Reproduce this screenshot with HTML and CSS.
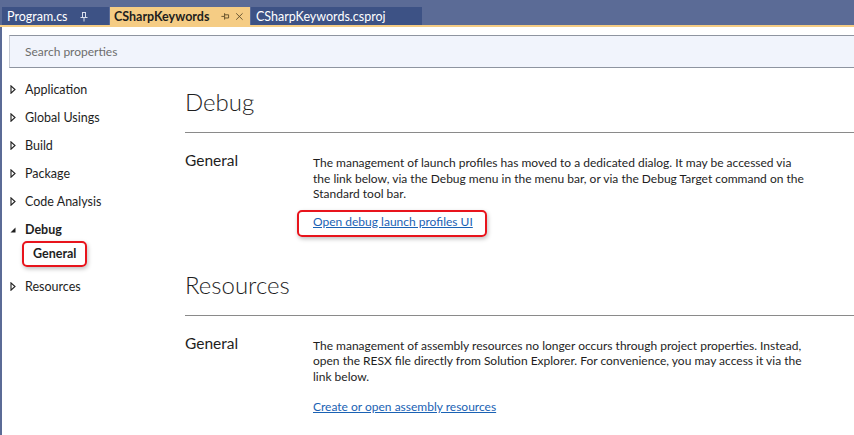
FILE: index.html
```html
<!DOCTYPE html>
<html>
<head>
<meta charset="utf-8">
<link rel="stylesheet" href="styles.css">
</head>
<body>
<div class="frame">
  <div class="tabbar">
    <div class="tab">
      <span class="tab-label">Program.cs</span>
      <svg class="pin" width="10" height="11" viewBox="0 0 10 11"><path d="M3 1.5h4M3.5 1.5v4.5M6.5 1.5v4.5M1.5 6.5h7M5 6.5v4" stroke="#d8deec" stroke-width="1" fill="none"/></svg>
    </div>
    <div class="tab active">
      <span class="tab-label">CSharpKeywords</span>
      <svg class="pin" width="11" height="10" viewBox="0 0 11 10"><path d="M0.5 5.5h3.5M4.5 1.5v8M4.5 3.5h5v4h-5" stroke="#4a3a1a" stroke-width="1" fill="none"/></svg>
      <svg class="close" width="11" height="11" viewBox="0 0 11 11"><path d="M1.5 1.5l8 8M9.5 1.5l-8 8" stroke="#5a4a2a" stroke-width="1.1" fill="none"/></svg>
    </div>
    <div class="tab">
      <span class="tab-label">CSharpKeywords.csproj</span>
    </div>
  </div>
  <div class="goldline"></div>
  <div class="search">Search properties</div>
  <div class="body">
    <nav class="nav">
      <div class="nav-item"><svg class="arrow" width="6" height="9" viewBox="0 0 6 9"><path d="M1 0.8L5 4.5L1 8.2Z" stroke="#1e1e1e" stroke-width="1.1" fill="none"/></svg>Application</div>
      <div class="nav-item"><svg class="arrow" width="6" height="9" viewBox="0 0 6 9"><path d="M1 0.8L5 4.5L1 8.2Z" stroke="#1e1e1e" stroke-width="1.1" fill="none"/></svg>Global Usings</div>
      <div class="nav-item"><svg class="arrow" width="6" height="9" viewBox="0 0 6 9"><path d="M1 0.8L5 4.5L1 8.2Z" stroke="#1e1e1e" stroke-width="1.1" fill="none"/></svg>Build</div>
      <div class="nav-item"><svg class="arrow" width="6" height="9" viewBox="0 0 6 9"><path d="M1 0.8L5 4.5L1 8.2Z" stroke="#1e1e1e" stroke-width="1.1" fill="none"/></svg>Package</div>
      <div class="nav-item"><svg class="arrow" width="6" height="9" viewBox="0 0 6 9"><path d="M1 0.8L5 4.5L1 8.2Z" stroke="#1e1e1e" stroke-width="1.1" fill="none"/></svg>Code Analysis</div>
      <div class="nav-item open"><svg class="arrow" width="6" height="9" viewBox="0 0 6 9"><path d="M0.5 7.5L5.5 2.5L5.5 7.5Z" fill="#1e1e1e"/></svg>Debug</div>
      <div class="nav-sub"><span class="sub-box">General</span></div>
      <div class="nav-item"><svg class="arrow" width="6" height="9" viewBox="0 0 6 9"><path d="M1 0.8L5 4.5L1 8.2Z" stroke="#1e1e1e" stroke-width="1.1" fill="none"/></svg>Resources</div>
    </nav>
    <main class="main">
      <section class="section">
        <h1 class="title">Debug</h1>
        <div class="rule"></div>
        <div class="row">
          <div class="label">General</div>
          <div class="content">
            <p class="desc">The management of launch profiles has moved to a dedicated dialog. It may be accessed via<br>the link below, via the Debug menu in the menu bar, or via the Debug Target command on the<br>Standard tool bar.</p>
            <div class="link-box highlighted"><a class="link" href="#">Open debug launch profiles UI</a></div>
          </div>
        </div>
      </section>
      <section class="section second">
        <h1 class="title">Resources</h1>
        <div class="rule"></div>
        <div class="row">
          <div class="label">General</div>
          <div class="content">
            <p class="desc">The management of assembly resources no longer occurs through project properties. Instead,<br>open the RESX file directly from Solution Explorer. For convenience, you may access it via the<br>link below.</p>
            <div class="link-box"><a class="link" href="#">Create or open assembly resources</a></div>
          </div>
        </div>
      </section>
    </main>
  </div>
</div>
</body>
</html>
```

FILE: styles.css
```css
html, body {
  margin: 0;
  padding: 0;
  background: #ffffff;
}
body {
  font-family: Lato, "Noto Sans", sans-serif;
  color: #1e1e1e;
  width: 854px;
  height: 435px;
  overflow: hidden;
}
.frame {
  height: 435px;
  border-left: 2px solid #5b6b96;
  box-sizing: border-box;
}
.tabbar {
  height: 25px;
  background: #5b6b96;
  display: flex;
  align-items: flex-end;
  gap: 1px;
  box-sizing: border-box;
  margin-left: -2px;
  padding-left: 2px;
}
.tab {
  height: 18px;
  background: #3d5285;
  color: #ffffff;
  display: flex;
  align-items: center;
  font-size: 12.5px;
  padding: 0 6px 0 5px;
  gap: 11px;
  box-sizing: border-box;
}
.tab:first-child { width: 107px; }
.tab:nth-child(3) { width: 171px; }
.tab.active {
  background: #f5cc84;
  color: #1e1e1e;
  font-weight: bold;
  width: 140px;
  gap: 5px;
  padding-left: 4px;
}
.tab.active .pin { margin-left: 7px; }
.tab-label { white-space: nowrap; }
.goldline {
  height: 2px;
  background: #f5cc84;
  margin-left: -2px;
}
.search {
  margin: 8px 0 0 7px;
  height: 33px;
  box-sizing: border-box;
  background: #f1f4fc;
  border-top: 1px solid #8e94a0;
  border-bottom: 1px solid #8e94a0;
  border-left: 1px solid #c8ccd4;
  padding-left: 15px;
  font-size: 12px;
  line-height: 31px;
  color: #6d6d6d;
}
.body {
  display: flex;
}
.nav {
  width: 183px;
  flex: none;
  padding-top: 7px;
  padding-left: 8px;
  box-sizing: border-box;
  font-size: 12.5px;
}
.nav-item {
  height: 28px;
  display: flex;
  align-items: center;
}
.arrow {
  margin-right: 9px;
  flex: none;
}
.nav-item.open { font-weight: bold; }
.nav-sub {
  height: 26px;
  margin: -2px 0 5px 12px;
}
.sub-box {
  display: inline-block;
  height: 26px;
  box-sizing: border-box;
  border: 2px solid #e8141c;
  border-radius: 5px;
  padding: 0 9px;
  line-height: 22px;
  font-weight: bold;
  box-shadow: 1px 2px 4px rgba(0,0,0,0.25);
}
.main {
  flex: 1;
  padding-top: 18px;
}
.title {
  margin: 0;
  font-size: 24px;
  font-weight: 300;
  line-height: 32px;
  color: #1e1e1e;
}
.rule {
  height: 1px;
  background: #8a8a8a;
  margin-top: 14px;
}
.row {
  display: grid;
  grid-template-columns: 128px 530px;
  padding-top: 17px;
}
.label {
  font-size: 15.5px;
  line-height: 20px;
}
.desc {
  margin: 5px 0 0 0;
  font-size: 12px;
  line-height: 15.5px;
}
.link-box {
  margin-top: 15px;
  font-size: 12px;
  line-height: 16px;
}
.link-box.highlighted {
  width: fit-content;
  margin: 8px 0 0 -16px;
  padding: 2px 12px 5px 14px;
  border: 2px solid #e8141c;
  border-radius: 5px;
  box-shadow: 1px 2px 4px rgba(0,0,0,0.25);
}
.link {
  color: #1a62b4;
  text-decoration: underline;
}
.section.second {
  padding-top: 32px;
}
```
